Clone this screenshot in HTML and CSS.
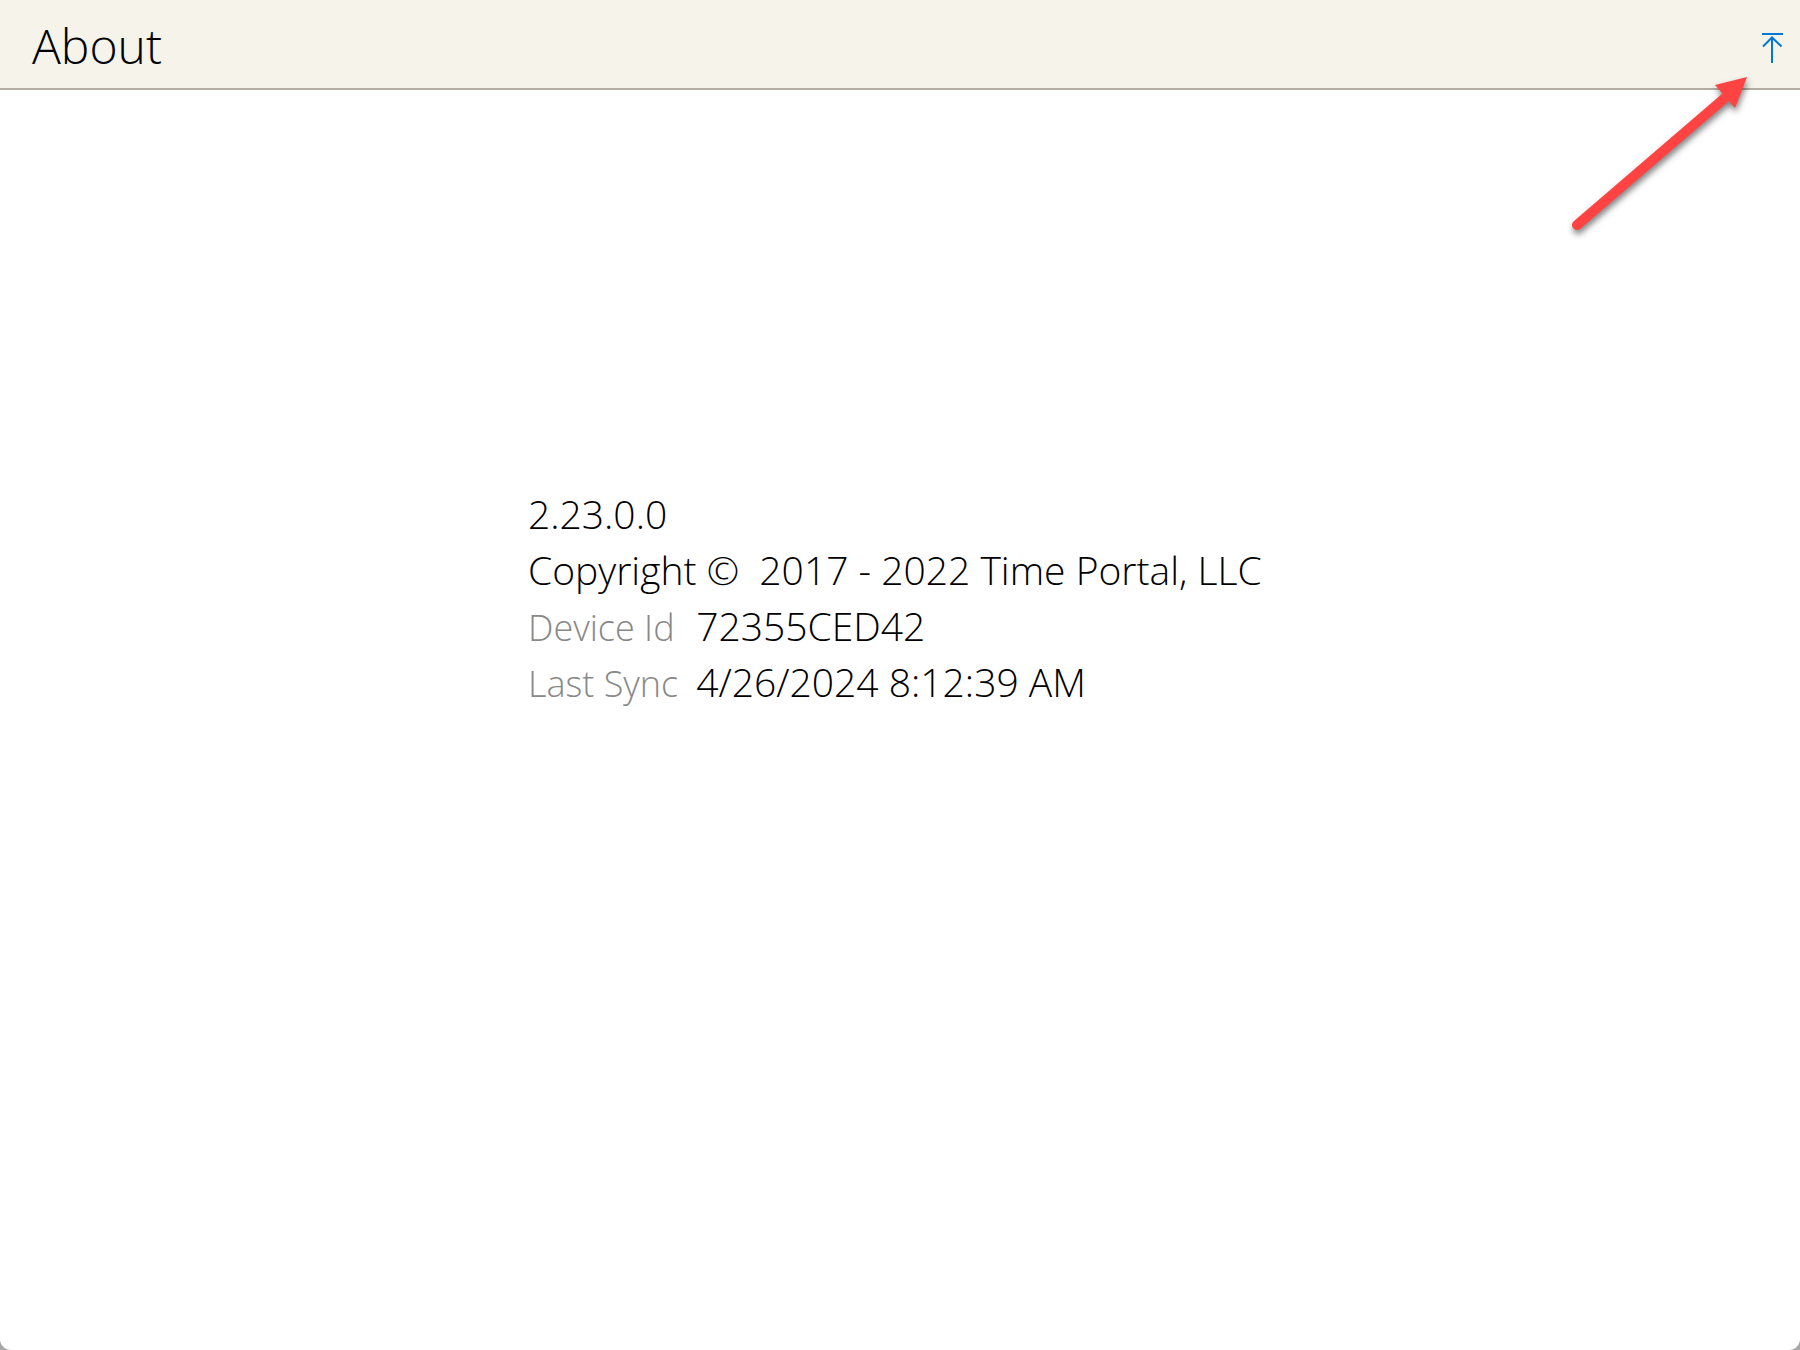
FILE: index.html
```
<!DOCTYPE html>
<html lang="en">
<head>
  <meta charset="UTF-8" />
  <meta name="viewport" content="width=device-width, initial-scale=1.0"/>
  <title>About</title>
  <link rel="stylesheet" href="styles.css">
</head>
<body>
  <div class="window">
    <header class="titlebar">
      <h1>About</h1>
      <button class="to-top" type="button" aria-label="Close panel">
        <svg width="24" height="32" viewBox="0 0 24 32" fill="none" stroke="#0078d4" stroke-width="2">
          <path d="M2 3H23M12 32V6M3 15.500L12 6.500L21.500 15.500" />
        </svg>
      </button>
    </header>

    <main class="about">
      <div class="info">
        <p>2.23.0.0</p>
        <p>Copyright © &nbsp;2017 - 2022 Time Portal, LLC</p>
        <dl>
          <dt>Device Id</dt>
          <dd>72355CED42</dd>
          <dt>Last Sync</dt>
          <dd>4/26/2024 8:12:39 AM</dd>
        </dl>
      </div>
    </main>

    <!-- Callout arrow pointing at the button -->
    <svg class="pointer" width="200" height="170" viewBox="0 0 200 170">
      <line x1="17" y1="155" x2="166" y2="27" stroke="#ff4343" stroke-width="10" stroke-linecap="round" />
      <polygon points="187,7 155,15 175,38" fill="#ff4343" />
    </svg>
  </div>
</body>
</html>
```

FILE: styles.css
```
* {
  box-sizing: border-box;
}
html, body {
  margin: 0;
  padding: 0;
}
body {
  background-color: #a8a8a8;
  color: #000000;
  font-family: "Segoe UI Light", "Open Sans", "Noto Sans", sans-serif;
  font-weight: 300;
}
.window {
  position: relative;
  display: flex;
  flex-direction: column;
  min-height: 100vh;
  background-color: #ffffff;
  border-radius: 0 0 11px 11px;
  overflow: hidden;
}
.titlebar {
  display: flex;
  align-items: center;
  justify-content: space-between;
  height: 90px;
  padding: 6px 16px 0 32px;
  background-color: #f5f3ea;
  border-bottom: 2px solid #b3aea5;
}
h1 {
  margin: 0;
  padding-bottom: 2px;
  font-size: 48px;
  font-weight: 300;
  line-height: 68px;
}
.to-top {
  display: flex;
  padding: 0;
  border: 0;
  background: none;
  cursor: pointer;
}
.about {
  display: flex;
  justify-content: center;
  padding: 396px 16px 16px;
}
.info {
  width: 744px;
  font-size: 39px;
  line-height: 56px;
}
p, dl, dd {
  margin: 0;
}
dl {
  display: grid;
  grid-template-columns: max-content 1fr;
  column-gap: 18px;
  align-items: baseline;
}
dt {
  color: #888888;
  font-size: 36px;
  line-height: 52px;
}
.pointer {
  position: absolute;
  top: 70px;
  right: 40px;
  filter: drop-shadow(1px 4px 3px rgba(0, 0, 0, 0.5));
}
```
